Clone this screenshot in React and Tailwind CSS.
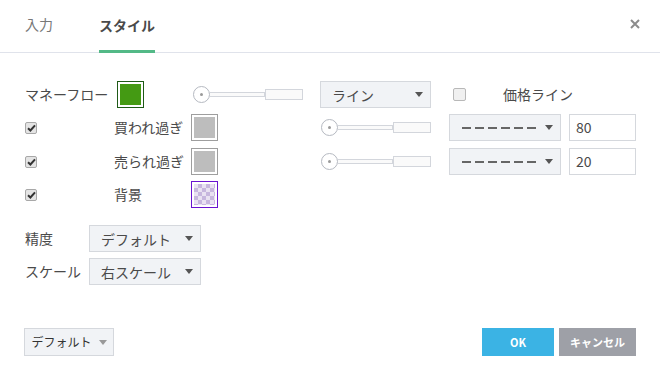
import React from "react";

const font = { fontFamily: '"Noto Sans CJK JP", "Noto Sans", sans-serif' };

function Arrow({ color = "#555" }) {
  return (
    <svg width="8" height="5" viewBox="0 0 8 5" className="shrink-0">
      <path d="M0 0 L8 0 L4 5 Z" fill={color} />
    </svg>
  );
}

function Select({ children, w = "w-[111px]" }) {
  return (
    <div
      className={`${w} h-[27px] flex items-center justify-between pl-[11px] pr-[7px] bg-[#f1f3f6] border border-[#d5d8dd] text-[14px] text-[#4a4a4a]`}
    >
      <span className="leading-none">{children}</span>
      <Arrow />
    </div>
  );
}

function DashSelect() {
  return (
    <div className="w-[112px] h-[27px] flex items-center justify-between pl-[12px] pr-[7px] bg-[#f1f3f6] border border-[#d5d8dd]">
      <div className="flex gap-[4px]">
        {[0, 1, 2, 3, 4, 5].map((i) => (
          <div key={i} className="w-[9px] h-[2px] bg-[#666]" />
        ))}
      </div>
      <Arrow />
    </div>
  );
}

function Slider() {
  return (
    <div className="flex items-center w-[110px]">
      <div className="w-[17px] h-[17px] rounded-full border border-[#b5b9c1] bg-white flex items-center justify-center shrink-0">
        <div className="w-[3px] h-[3px] rounded-full bg-[#9a9a9a]" />
      </div>
      <div className="w-[55px] h-[5px] border border-l-0 border-[#d3d6dc] bg-[#fafafa]" />
      <div className="w-[38px] h-[11px] border border-[#d3d6dc] bg-[#fafafa]" />
    </div>
  );
}

function Checked() {
  return (
    <div className="w-[12px] h-[12px] border border-[#a8a8a8] rounded-[2px] bg-[#e4e4e4] flex items-center justify-center shrink-0">
      <svg width="9" height="8" viewBox="0 0 9 8">
        <path d="M1 4.2 L3.4 6.5 L8 1.3" fill="none" stroke="#333" strokeWidth="2" />
      </svg>
    </div>
  );
}

function Unchecked() {
  return (
    <div className="w-[13px] h-[13px] border border-[#b8b8b8] rounded-[2px] bg-[#f0f0f0] shrink-0" />
  );
}

function Swatch({ kind }) {
  if (kind === "green") {
    return (
      <div className="w-[27px] h-[27px] border border-[#1f5a17] p-[2px] bg-white shrink-0">
        <div className="w-full h-full bg-[#449a13]" />
      </div>
    );
  }
  if (kind === "gray") {
    return (
      <div className="w-[27px] h-[27px] border border-[#9e9e9e] p-[2px] bg-white shrink-0">
        <div className="w-full h-full bg-[#bdbdbd]" />
      </div>
    );
  }
  return (
    <div className="w-[27px] h-[27px] border border-[#6a14d0] p-[2px] bg-white shrink-0">
      <div className="w-full h-full bg-[#e9e2f2] bg-[linear-gradient(45deg,#c7b7de_25%,transparent_25%,transparent_75%,#c7b7de_75%),linear-gradient(45deg,#c7b7de_25%,transparent_25%,transparent_75%,#c7b7de_75%)] bg-[length:8px_8px] bg-[position:0_0,4px_4px]" />
    </div>
  );
}

export default function App() {
  return (
    <div className="w-[660px] h-[381px] bg-white text-[#4a4a4a] overflow-hidden" style={font}>
      <div className="h-[53px] flex items-stretch border-b border-[#e0e3eb]">
        <div className="pl-[25px] flex items-center pb-[3px] text-[14px] text-[#787878]">入力</div>
        <div className="ml-[46px] flex items-center pt-[1px] text-[14px] font-bold text-[#4a4a4a] border-b-[3px] border-[#53b987] mb-[-1px]">
          スタイル
        </div>
        <div className="ml-auto mr-[20px] flex items-center pb-[4px]">
          <svg width="10" height="10" viewBox="0 0 10 10">
            <path d="M1 1 L9 9 M9 1 L1 9" stroke="#8c8c8c" strokeWidth="2" />
          </svg>
        </div>
      </div>

      <div className="pl-[25px] pt-[28px] text-[14px]">
        <div className="h-[27px] flex items-center">
          <span className="w-[92px]">マネーフロー</span>
          <Swatch kind="green" />
          <div className="ml-[49px]">
            <Slider />
          </div>
          <div className="ml-[17px]">
            <Select>ライン</Select>
          </div>
          <div className="ml-[22px]">
            <Unchecked />
          </div>
          <span className="ml-[37px]">価格ライン</span>
        </div>

        <div className="h-[27px] mt-[6px] flex items-center">
          <Checked />
          <span className="ml-[77px] w-[77px]">買われ過ぎ</span>
          <Swatch kind="gray" />
          <div className="ml-[103px]">
            <Slider />
          </div>
          <div className="ml-[18px]">
            <DashSelect />
          </div>
          <div className="ml-[8px] w-[67px] h-[27px] border border-[#d5d8dd] flex items-center pl-[6px]">80</div>
        </div>

        <div className="h-[27px] mt-[7px] flex items-center">
          <Checked />
          <span className="ml-[77px] w-[77px]">売られ過ぎ</span>
          <Swatch kind="gray" />
          <div className="ml-[103px]">
            <Slider />
          </div>
          <div className="ml-[18px]">
            <DashSelect />
          </div>
          <div className="ml-[8px] w-[67px] h-[27px] border border-[#d5d8dd] flex items-center pl-[6px]">20</div>
        </div>

        <div className="h-[27px] mt-[6px] flex items-center">
          <Checked />
          <span className="ml-[77px] w-[77px]">背景</span>
          <Swatch kind="checker" />
        </div>

        <div className="h-[27px] mt-[17px] flex items-center">
          <span className="w-[64px]">精度</span>
          <Select w="w-[112px]">デフォルト</Select>
        </div>
        <div className="h-[27px] mt-[6px] flex items-center">
          <span className="w-[64px]">スケール</span>
          <Select w="w-[112px]">右スケール</Select>
        </div>
      </div>

      <div className="mt-[43px] px-[24px] flex items-center">
        <div className="h-[28px] w-[90px] flex items-center justify-center gap-[7px] bg-[#f1f3f6] border border-[#d5d8dd] text-[12px] text-[#333]">
          <span>デフォルト</span>
          <Arrow color="#999" />
        </div>
        <div className="ml-auto h-[28px] w-[72px] flex items-center justify-center bg-[#3bb3e4] text-white text-[11px] font-bold">
          OK
        </div>
        <div className="ml-[5px] h-[28px] w-[77px] flex items-center justify-center bg-[#9ea0a7] text-white text-[11px] font-bold">
          キャンセル
        </div>
      </div>
    </div>
  );
}
